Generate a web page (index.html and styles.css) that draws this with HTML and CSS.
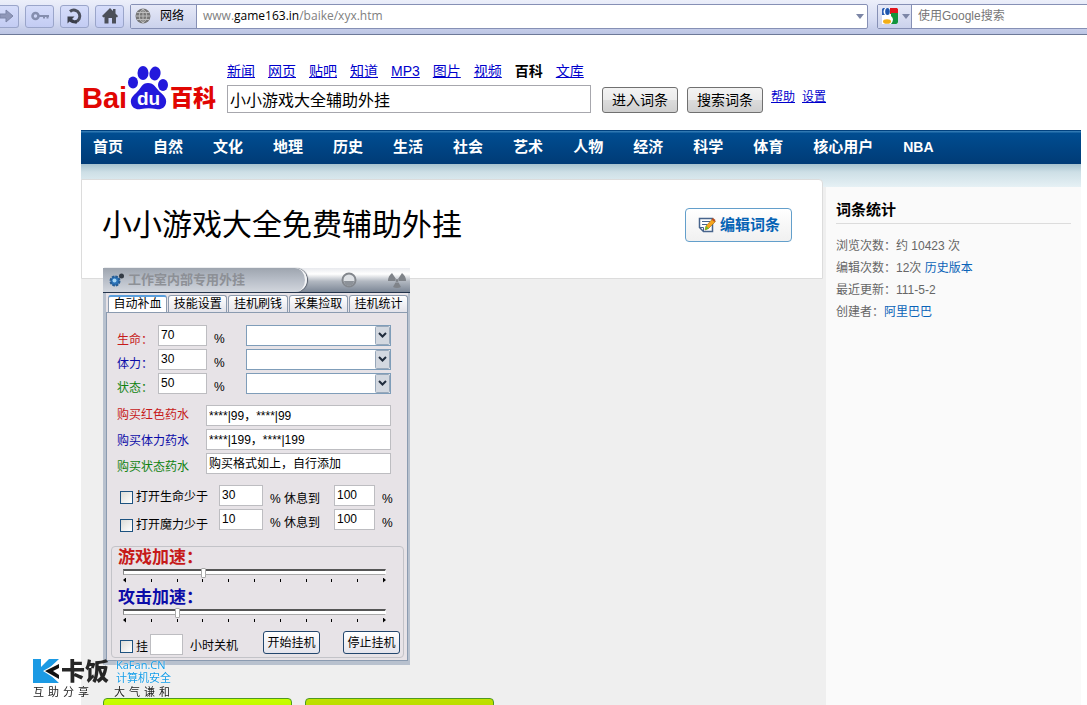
FILE: index.html
```html
<!DOCTYPE html>
<html lang="zh-CN">
<head>
<meta charset="utf-8">
<title>小小游戏大全免费辅助外挂</title>
<link rel="stylesheet" href="styles.css">
</head>
<body>
<div class="toolbar">
  <button class="tool tool-first" aria-label="前进"><svg width="18" height="18" viewBox="0 0 18 18"><path d="M0 7h6V3l7 6-7 6v-4H0z" fill="#8f97b8" stroke="#7d86a8"/></svg></button>
  <button class="tool" aria-label="密码"><svg width="20" height="18" viewBox="0 0 20 18"><circle cx="5.500" cy="9" r="3" fill="none" stroke="#858eae" stroke-width="2.600"/><path d="M8.500 9H19M14 9v2.500M17.500 9v2.500" stroke="#858eae" stroke-width="2" fill="none"/></svg></button>
  <button class="tool" aria-label="刷新"><svg width="18" height="18" viewBox="0 0 18 18"><path d="M4 4.500A6 6 0 1 1 9 15" fill="none" stroke="#4b4f5c" stroke-width="3"/><path d="M1.500 9.500h7L6 12q2 1.500 5 1.500v3Q6 17 3.500 14.500l-2 2z" fill="#3a3e4a"/></svg></button>
  <button class="tool" aria-label="主页"><svg width="18" height="18" viewBox="0 0 18 18"><path d="M9 1l3 3V2h2.500v4.500L17 9l-1 1.500-1-.5v6.500h-4V11H7.500v5.500h-4V10l-1 .5L1 9z" fill="#4b4f59"/></svg></button>
  <div class="address">
    <button class="site"><svg width="16" height="16" viewBox="0 0 16 16"><circle cx="8" cy="8" r="7.500" fill="#777"/><path d="M1 8h14M8 1v14M2 4.500h12M2 11.500h12M8 1C3 5 3 11 8 15M8 1c5 4 5 10 0 14" fill="none" stroke="#bdbdbd"/></svg><span>网络</span></button>
    <div class="url" role="textbox" aria-label="地址">www.<b>game163.in</b>/baike/xyx.htm</div>
    <svg class="arrow" width="8" height="5" viewBox="0 0 8 5"><path d="M0 0h8L4 5z" fill="#7c86a6"/></svg>
  </div>
  <div class="search">
    <button class="engine" aria-label="搜索引擎"><svg width="18" height="18" viewBox="0 0 18 18"><path d="M1 1h16v16H1z" fill="#fff"/><path d="M9 1h7l1 1v5H9z" fill="#e1141c"/><path d="M10 6h7v9a2 2 0 0 1-2 2h-5q4-5 0-8z" fill="#12943c"/><path d="M1 8V2l1-1h2Q1 5 4 8z" fill="#2d5fb4"/><ellipse cx="6.500" cy="4.500" rx="2.300" ry="3.500" fill="#1e56ae"/><ellipse cx="6" cy="14.500" rx="4" ry="2.300" fill="#f2ae16"/></svg><svg width="8" height="5" viewBox="0 0 8 5"><path d="M0 0h8L4 5z" fill="#7c86a6"/></svg></button>
    <input class="search-text" type="text" aria-label="搜索" placeholder="使用Google搜索">
  </div>
</div>

<div class="page">
  <header class="header">
    <svg class="logo" width="136" height="46" viewBox="0 0 136 46">
      <text class="logo-latin" x="0" y="42">Bai</text>
      <g fill="#2319dc"><ellipse cx="51" cy="16.500" rx="5" ry="6"/><ellipse cx="61" cy="7" rx="5.500" ry="7"/><ellipse cx="73" cy="7.500" rx="5.500" ry="7" transform="rotate(12 73 7.500)"/><ellipse cx="81" cy="19" rx="5" ry="6"/><path d="M66 17c6 0 8 5 12 9 4 3 7 7 6 11-1 5-5 7-10 6-5-1-10-1-15 0-5 1-9-1-10-6-1-5 3-8 6-11 4-4 5-9 11-9z"/></g>
      <text class="logo-du" x="55" y="39">du</text>
      <text class="logo-cjk" x="88" y="40">百科</text>
    </svg>
    <div class="finder">
      <nav class="channels"><a href="#">新闻</a><a href="#">网页</a><a href="#">贴吧</a><a href="#">知道</a><a href="#">MP3</a><a href="#">图片</a><a href="#">视频</a><strong>百科</strong><a href="#">文库</a></nav>
      <form class="finder-form">
        <input class="word" type="text" aria-label="词条" value="小小游戏大全辅助外挂">
        <button class="go" type="button">进入词条</button>
        <button class="go" type="button">搜索词条</button>
        <span class="help"><a href="#">帮助</a><a href="#">设置</a></span>
      </form>
    </div>
  </header>

  <nav class="mainnav"><a href="#">首页</a><a href="#">自然</a><a href="#">文化</a><a href="#">地理</a><a href="#">历史</a><a href="#">生活</a><a href="#">社会</a><a href="#">艺术</a><a href="#">人物</a><a href="#">经济</a><a href="#">科学</a><a href="#">体育</a><a href="#">核心用户</a><a class="latin" href="#">NBA</a></nav>

  <div class="columns">
    <main class="main">
      <section class="title-card">
        <h1>小小游戏大全免费辅助外挂</h1>
        <button class="edit"><svg width="18" height="18" viewBox="0 0 18 18"><path d="M1.500 2.500h13v13h-9l-4-4z" fill="#fff" stroke="#47648c" stroke-width="1.500"/><path d="M1.500 11.500h4v4M4 5.500h8M4 8.500h5" fill="none" stroke="#47648c"/><path d="M7 14l1-4 6.500-7 3 2.500-7 7z" fill="#f6a51c" stroke="#9c6414" stroke-width=".6"/><path d="M7 14l1-4 3 2.500z" fill="#6cbd21"/><path d="M13.500 3.500l1.500-1.500 2.500 2-1 2z" fill="#b94d20"/></svg>编辑词条</button>
      </section>

      <section class="bot">
        <div class="bot-bar">
          <div class="bot-name"><svg width="16" height="16" viewBox="0 0 16 16"><circle cx="6" cy="9" r="4.500" fill="#2b72b8"/><circle cx="6" cy="9" r="4.500" fill="none" stroke="#245c94" stroke-width="2" stroke-dasharray="2.500 1"/><circle cx="5.500" cy="8.500" r="2" fill="#a5d5f4"/><circle cx="12.500" cy="4" r="2.500" fill="#333b45"/></svg>工作室内部专用外挂</div>
          <svg class="ring" width="18" height="18" viewBox="0 0 18 18"><circle cx="9" cy="9" r="6.500" fill="#dfe2e6" stroke="#83878d" stroke-width="2"/><path d="M4 10h10a5 5 0 0 1-10 0z" fill="#8d9299"/></svg>
          <svg width="20" height="18" viewBox="0 0 20 18"><path d="M5 2l4 6q-1 1-1 2H1q0-5 4-8zM15 2l-4 6q1 1 1 2h7q0-5-4-8zM8.500 11.500h3L14 16q-4 2-8 0z" fill="#7f8389"/><circle cx="10" cy="9.500" r="1.500" fill="#7f8389"/></svg>
        </div>
        <div class="tabs"><button class="tab on">自动补血</button><button class="tab">技能设置</button><button class="tab">挂机刷钱</button><button class="tab">采集捡取</button><button class="tab">挂机统计</button></div>
        <div class="bot-body">
          <div class="rows">
            <div class="row stat"><label class="red" for="hp">生命：</label><input id="hp" type="text" value="70"><span class="pct">%</span><select aria-label="生命药品"><option></option></select></div>
            <div class="row stat"><label class="blue" for="mp">体力：</label><input id="mp" type="text" value="30"><span class="pct">%</span><select aria-label="体力药品"><option></option></select></div>
            <div class="row stat"><label class="green" for="st">状态：</label><input id="st" type="text" value="50"><span class="pct">%</span><select aria-label="状态药品"><option></option></select></div>
          </div>
          <div class="rows">
            <div class="row buy"><label class="red" for="b1">购买红色药水</label><input id="b1" type="text" value="****|99，****|99"></div>
            <div class="row buy"><label class="blue" for="b2">购买体力药水</label><input id="b2" type="text" value="****|199，****|199"></div>
            <div class="row buy"><label class="green" for="b3">购买状态药水</label><input id="b3" type="text" value="购买格式如上，自行添加"></div>
          </div>
          <div class="rows">
            <div class="row rest"><label><input type="checkbox">打开生命少于</label><input type="text" aria-label="生命下限" value="30"><span class="pct">% 休息到</span><input type="text" aria-label="生命上限" value="100"><span class="pct">%</span></div>
            <div class="row rest"><label><input type="checkbox">打开魔力少于</label><input type="text" aria-label="魔力下限" value="10"><span class="pct">% 休息到</span><input type="text" aria-label="魔力上限" value="100"><span class="pct">%</span></div>
          </div>
          <div class="speed">
            <label class="red" for="s1">游戏加速：</label>
            <input id="s1" type="range" min="0" max="10" value="3">
            <div class="ticks"><i></i><i></i><i></i><i></i><i></i><i></i><i></i><i></i><i></i><i></i><i></i></div>
            <label class="blue" for="s2">攻击加速：</label>
            <input id="s2" type="range" min="0" max="10" value="2">
            <div class="ticks"><i></i><i></i><i></i><i></i><i></i><i></i><i></i><i></i><i></i><i></i><i></i></div>
            <div class="off"><label><input type="checkbox">挂</label><input type="text" id="hours" aria-label="小时"><span>小时关机</span><button class="run">开始挂机</button><button class="run">停止挂机</button></div>
          </div>
        </div>
      </section>

      <div class="downloads"><button class="download bright" aria-label="下载"></button><button class="download" aria-label="下载"></button></div>
    </main>

    <aside class="side">
      <h2>词条统计</h2>
      <ul>
        <li>浏览次数：约 10423 次</li>
        <li>编辑次数：12次 <a href="#">历史版本</a></li>
        <li>最近更新：111-5-2</li>
        <li>创建者：<a href="#">阿里巴巴</a></li>
      </ul>
    </aside>
  </div>
</div>

<div class="mark">
  <div class="mark-top">
    <svg width="26" height="26" viewBox="0 0 26 26"><path d="M0 1h8v8l8-8h10L13 13l13 12H0z" fill="#1b9ae4"/><path d="M26 4v6l-6 3 6 4v6L10 13z" fill="#fff"/><path d="M26 6v4l-6 3 6 4v4L12 13z" fill="#111"/></svg>
    <strong>卡饭</strong>
    <span>KaFan.CN<br>计算机安全</span>
  </div>
  <div class="mark-low"><span>互助分享</span><span>大气谦和</span></div>
</div>
</body>
</html>
```
FILE: styles.css
```css
* { box-sizing: border-box; }
html, body { height: 100%; }
body {
  margin: 0;
  overflow: hidden;
  background: #fff;
  color: #000;
  font: 12px/16px "Liberation Sans", "Noto Sans CJK SC", sans-serif;
}
button, input, select { font: inherit; color: inherit; margin: 0; padding: 0; border-radius: 0; }
h1, h2, ul { margin: 0; padding: 0; font-weight: normal; list-style: none; }
svg { flex: none; }

/* browser toolbar */
.toolbar {
  display: flex;
  align-items: center;
  gap: 6px;
  height: 35px;
  padding-bottom: 2px;
  border-bottom: 1px solid #6d7998;
  background: linear-gradient(#eceffa, #d5dbf2 60%, #bcc5e4);
  overflow: hidden;
}
.tool {
  display: flex;
  align-items: center;
  justify-content: center;
  flex: none;
  width: 29px;
  height: 23px;
  border: 1px solid #9aa5ca;
  border-radius: 3px;
  background: linear-gradient(#d6ddfa, #c3ccf3);
}
.tool-first { width: 19px; border-left: 0; border-radius: 0 3px 3px 0; }
.address, .search {
  display: flex;
  align-items: center;
  height: 25px;
  border: 1px solid #8690b5;
  border-radius: 2px;
  background: #fff;
}
.address { flex: 1; padding-right: 3px; }
.search { width: 220px; margin: 0 -10px 0 3px; }
.site, .engine {
  display: flex;
  align-items: center;
  height: 100%;
  border: 0;
  border-right: 1px solid #8690b5;
  background: linear-gradient(#e6e9f7, #cbd2ec);
}
.site { gap: 9px; width: 66px; padding-left: 4px; }
.engine { gap: 3px; width: 34px; padding-left: 3px; }
.url { flex: 1; padding-left: 6px; color: #808080; font: 12px/20px "Open Sans", sans-serif; }
.url b { color: #000; font-weight: normal; }
.search-text { flex: 1; border: 0; padding-left: 6px; font-size: 12px; background: none; }
.search-text::placeholder { color: #777; }

/* site header */
.page { display: flex; flex-direction: column; min-height: 100%; margin: 0 6px 0 81px; }
.header { display: flex; height: 95px; }
.logo { margin: 31px 9px 0 1px; }
.logo-latin { font: bold 29px "Liberation Sans", sans-serif; fill: #e10602; }
.logo-du { font: bold 19px "Liberation Sans", sans-serif; fill: #fff; }
.logo-cjk { font: 900 23px "Noto Sans CJK SC", sans-serif; fill: #e10602; }
.channels { display: flex; gap: 13px; padding-top: 26px; font-size: 14px; line-height: 20px; }
.channels a, .help a { color: #0000cc; }
.finder-form { display: flex; align-items: center; margin-top: 4px; }
.word { width: 364px; height: 28px; margin-right: 11px; padding: 0 2px; border: 1px solid #a7a7ad; font-size: 16px; }
.go {
  width: 76px;
  height: 26px;
  margin: 1px 9px 0 0;
  border: 1px solid #707070;
  border-radius: 3px;
  background: linear-gradient(#f3f3f3, #ebebeb 50%, #dcdcdc 50%, #cfcfcf);
  font-size: 14px;
}
.help { display: flex; gap: 7px; margin: -4px 0 0 -1px; }
.mainnav {
  display: flex;
  flex: none;
  gap: 30px;
  height: 34px;
  padding-left: 12px;
  border-top: 1px solid #00417f;
  background: linear-gradient(#2f78b2 1px, #004d91 2px, #003b76);
  font-size: 15px;
  font-weight: bold;
  line-height: 32px;
}
.mainnav a { color: #fff; text-decoration: none; }
.mainnav .latin { font-size: 14px; }

/* content */
.columns {
  display: flex;
  flex: 1;
  background: linear-gradient(#a7c2ce, #cddfe6 8px, #e6f1f5 23px, #efefef 23px);
}
.main { flex: 1; padding-top: 15px; }
.title-card {
  display: flex;
  align-items: center;
  justify-content: space-between;
  height: 100px;
  margin-right: 3px;
  padding: 0 30px 8px 20px;
  border: 1px solid #dcdcdc;
  border-radius: 0 4px 0 0;
  background: #fff;
}
h1 { font-size: 30px; line-height: 40px; }
.edit {
  display: flex;
  align-items: center;
  gap: 4px;
  width: 107px;
  height: 34px;
  padding-left: 12px;
  border: 1px solid #639fcb;
  border-radius: 4px;
  background: linear-gradient(#fff, #f0f0f0);
  color: #0563b5;
  font-size: 15px;
  font-weight: bold;
}
.side { width: 255px; margin-top: 23px; padding: 12px 10px; background: #fafafa; }
.side h2 { height: 25px; border-bottom: 1px solid #dcdcdc; font-size: 15px; font-weight: bold; line-height: 22px; }
.side ul { padding-top: 11px; color: #666; line-height: 22px; }
.side a { color: #0a63b8; text-decoration: none; }

/* helper window */
.bot {
  position: relative;
  width: 307px;
  margin: -11px 0 0 22px;
  border: solid #b8c1ce;
  border-width: 0 2px 4px 3px;
  background: #e7e3e7;
}
.bot-bar {
  display: flex;
  align-items: center;
  height: 25px;
  margin: 0 -2px 0 -3px;
  border-bottom: 1px solid #21324a;
  background: linear-gradient(#e8eaee, #fff 25%, #b2b8c1 55%, #7c8796);
}
.bot-name {
  display: flex;
  align-items: center;
  gap: 3px;
  width: 204px;
  height: 24px;
  padding-left: 6px;
  border-right: 2px solid #f4f5f7;
  border-radius: 0 12px 12px 0;
  box-shadow: 1px 0 1px #4e5663;
  background: linear-gradient(#9ea5af, #b8bec8 50%, #d2d6dd);
  color: #8d9096;
  font-size: 13px;
  font-weight: bold;
}
.ring { margin: 0 29px 0 33px; }
.tabs { display: flex; gap: 1px; padding: 2px 0 0 2px; }
.tab {
  flex: 1;
  height: 17px;
  border: 1px solid #8d9bae;
  border-bottom: 0;
  border-radius: 3px 3px 0 0;
  background: linear-gradient(#fff, #e3e3ea);
  line-height: 16px;
  white-space: nowrap;
}
.tab.on { border-top: 2px solid #5a9edc; background: #fff; line-height: 15px; }
.bot-body { padding: 12px 3px 2px 4px; border: 1px solid #8b9bb0; }
.rows { display: grid; gap: 3px; margin: 0 12px 11px 6px; }
.row { display: grid; align-items: start; height: 21px; }
.stat { grid-template-columns: 41px 49px 39px 145px; }
.buy { grid-template-columns: 89px 185px; }
.rest { grid-template-columns: 102px 44px 71px 41px 16px; }
.row label { padding-top: 7px; white-space: nowrap; }
.buy label { padding-top: 2px; }
.buy:nth-child(2) label { padding-top: 4px; }
.buy:nth-child(3) label { padding-top: 6px; }
.row.rest label { display: flex; align-items: center; gap: 3px; padding: 4px 0 0 3px; }
.row.rest:nth-child(2) label { padding-top: 8px; }
.pct { padding: 6px 0 0 7px; white-space: nowrap; }
.bot input[type="text"] { width: 100%; height: 21px; padding: 0 2px 2px; border: 1px solid #bdbdc1; background: #fff; }
.bot input[type="checkbox"] { appearance: none; flex: none; width: 13px; height: 13px; border: 1px solid #1d5280; background: linear-gradient(135deg, #dcdcd7, #fff); }
.bot select {
  appearance: none;
  height: 21px;
  border: 1px solid #7f9db9;
  background:
    url("data:image/svg+xml,%3Csvg xmlns='http://www.w3.org/2000/svg' width='15' height='19'%3E%3Crect x='.5' y='.5' width='14' height='18' rx='1' fill='%23d3d8e0' stroke='%2398a8ba'/%3E%3Cpath d='M4 7l3.500 3.500L11 7' fill='none' stroke='%23202c3c' stroke-width='2'/%3E%3C/svg%3E") right / 15px 19px no-repeat,
    #fff;
}
.red { color: #c61a1a; }
.blue { color: #0c0ca8; }
.green { color: #108210; }
.speed { display: grid; padding: 0 3px 2px 6px; border: 1px solid #c3c3c8; border-radius: 4px; margin-top: 16px; }
.speed > label { height: 20px; font-size: 17px; font-weight: bold; line-height: 22px; }
.speed input[type="range"] { appearance: none; width: 263px; height: 9px; margin-left: 5px; background: none; }
.speed input[type="range"]::-webkit-slider-runnable-track { height: 6px; border: 1px solid #888; border-top: 2px solid #555; border-right-color: #fff; border-bottom-color: #aaa; background: #fff; }
.speed input[type="range"]::-webkit-slider-thumb { appearance: none; width: 5px; height: 10px; margin-top: -3px; border: 1px solid #aaa; border-radius: 1px; background: #fff; }
.ticks { display: flex; align-items: center; justify-content: space-between; width: 263px; height: 8px; margin: 0 0 3px 5px; }
.ticks i { width: 1px; height: 3px; background: #000; }
.ticks i:first-child, .ticks i:last-child { width: 3px; height: 5px; clip-path: polygon(0 50%, 100% 0, 100% 100%); }
.ticks i:last-child { clip-path: polygon(0 0, 100% 50%, 0 100%); }
.off { display: flex; align-items: center; height: 28px; padding: 7px 0 0 2px; }
.off label { display: flex; align-items: center; gap: 3px; width: 30px; padding-top: 4px; }
.bot .off input[type="text"] { width: 33px; }
.off span { width: 80px; padding: 3px 0 0 7px; }
.run { width: 57px; height: 23px; margin: -4px 23px 0 0; border: 1px solid #22466d; border-radius: 3px; background: linear-gradient(#fff, #e4e4ec); white-space: nowrap; }
.run:last-child { margin-right: 0; }

.downloads { display: flex; gap: 13px; padding: 33px 0 0 22px; }
.download { width: 189px; height: 40px; border: 1px solid #4d9a20; border-radius: 4px; background: linear-gradient(#c0e000, #a8cc00); }
.download.bright { background: linear-gradient(#c8ff00, #a8e000); }

/* watermark over the page corner */
.mark { position: fixed; left: 33px; bottom: 6px; }
.mark-top { display: flex; align-items: flex-start; gap: 2px; height: 28px; }
.mark-top strong { width: 53px; color: #262626; font: 900 24px/24px "Noto Sans CJK SC", sans-serif; }
.mark-top span { color: #159de8; font: 11px/13px "Open Sans", "Noto Sans CJK SC", sans-serif; text-shadow: 0 0 2px #fff; }
.mark-low { display: flex; gap: 21px; color: #222; font-size: 11px; line-height: 13px; }
.mark-low span { letter-spacing: 4px; text-shadow: 0 0 2px #fff; }
```
